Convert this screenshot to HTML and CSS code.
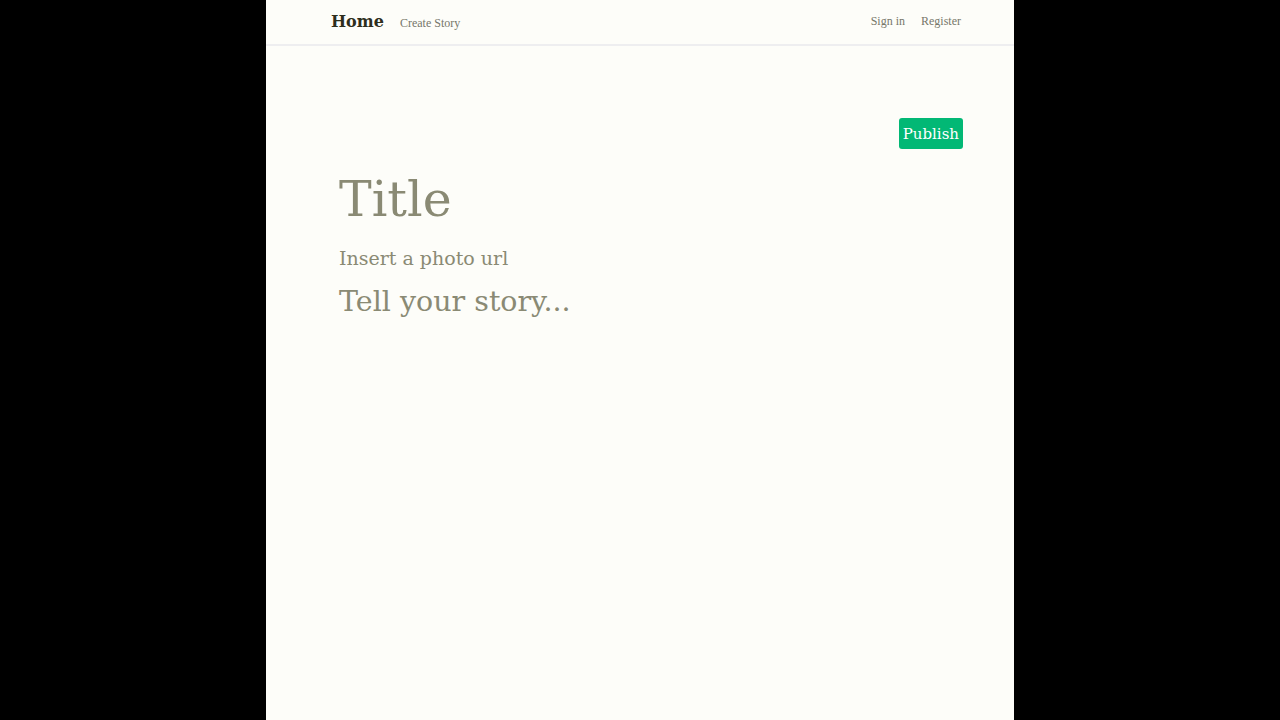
FILE: index.html
```html
<!DOCTYPE html>
<html>
<head>
<meta charset="utf-8">
<link rel="stylesheet" href="styles.css">
</head>
<body>
<div class="page">
  <header class="nav">
    <div class="nav-inner">
      <div class="nav-left">
        <a class="brand">Home</a>
        <a class="link">Create Story</a>
      </div>
      <div class="nav-right">
        <a class="link">Sign in</a>
        <a class="link">Register</a>
      </div>
    </div>
  </header>
  <main class="editor">
    <div class="actions"><button class="publish">Publish</button></div>
    <div class="fields">
      <div class="title">Title</div>
      <div class="photo">Insert a photo url</div>
      <div class="story">Tell your story...</div>
    </div>
  </main>
</div>
</body>
</html>
```
FILE: styles.css
```css
html, body { margin: 0; padding: 0; background: #000; height: 100%; }
body { font-family: "DejaVu Serif", "Liberation Serif", serif; }
.page {
  width: 748px;
  margin: 0 auto;
  min-height: 720px;
  background: #fdfdf9;
}
.nav {
  height: 44px;
  border-bottom: 2px solid #eeeef0;
}
.nav-inner {
  margin: 0 53px 0 65px;
  height: 42px;
  display: flex;
  align-items: center;
  justify-content: space-between;
}
.nav-left, .nav-right { display: flex; align-items: baseline; }
.brand { font-weight: bold; font-size: 16px; color: #2e2e1c; margin-right: 16px; }
.link { font-family: "Liberation Serif", serif; font-size: 12px; color: #77776a; }
.nav-right .link { margin-left: 16px; }
.editor { padding: 72px 51px 0 73px; }
.actions { display: flex; justify-content: flex-end; }
.publish {
  font-family: inherit;
  background: #02b875;
  color: #fff;
  border: none;
  border-radius: 3px;
  height: 31px;
  padding: 0 4px;
  font-size: 15px;
}
.fields { margin-top: 14px; color: #8a8a74; }
.title { font-size: 49px; line-height: 74px; }
.photo { font-size: 19px; line-height: 30px; margin-top: 6px; }
.story { font-size: 28.5px; line-height: 58px; }
```
